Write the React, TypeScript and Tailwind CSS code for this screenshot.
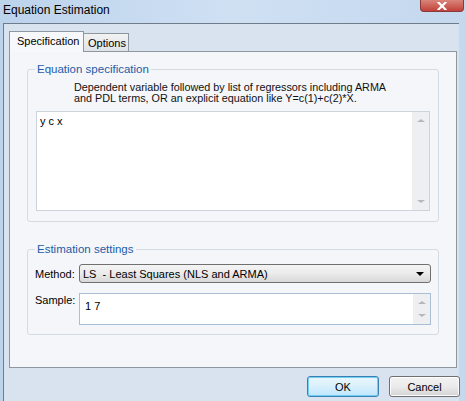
import React from "react";

const ui = { fontFamily: '"Liberation Sans", Arial, sans-serif' };

function ScrollArrows({ h }: { h: string }) {
  return (
    <div className={`w-[17px] ${h} bg-[#eeeff1] flex flex-col justify-between items-center py-[7px]`}>
      <span className="w-0 h-0 border-x-[4px] border-x-transparent border-b-[3px] border-b-[#b4b8bd]" />
      <span className="w-0 h-0 border-x-[4px] border-x-transparent border-t-[3px] border-t-[#b4b8bd]" />
    </div>
  );
}

function GroupBox({ label, className, children }: { label: string; className: string; children: React.ReactNode }) {
  return (
    <div className={`relative border border-[#d5dbe2] rounded-[3px] ${className}`}>
      <span className="absolute -top-[8px] left-[7px] px-[2px] bg-[#f4f6fa] text-[#1d5ca8] text-[11.5px] leading-[14px]">
        {label}
      </span>
      {children}
    </div>
  );
}

export default function App() {
  return (
    <div
      className="w-[465px] h-[401px] overflow-hidden flex flex-col bg-gradient-to-r from-[#bcd3ec] via-[#cfe0f3] to-[#c4d8ee] text-black"
      style={ui}
    >
      {/* title bar */}
      <div className="h-[23px] shrink-0 flex justify-between items-start">
        <span className="pl-[3px] pt-[2px] text-[12px] leading-[16px] text-black">Equation Estimation</span>
        <div className="mr-[1px] w-[44px] h-[12px] rounded-b-[4px] border border-t-0 border-[#8a3a3a] bg-gradient-to-b from-[#d9847a] to-[#c0403a] flex items-center justify-center">
          <svg width="10" height="8" viewBox="0 0 10 8">
            <path d="M1.5 0.5 L8.5 7.5 M8.5 0.5 L1.5 7.5" stroke="#ffffff" strokeWidth="2.2" strokeLinecap="square" />
          </svg>
        </div>
      </div>

      {/* client area */}
      <div className="flex-1 ml-[3px] mr-[6px] border-l border-t border-[#6f7c8c] bg-[#d9e3f0] pt-[7px]">
        {/* tabs */}
        <div className="flex items-end ml-[5px] h-[20px]">
          <div className="h-[21px] w-[75px] border border-b-0 border-[#8e96a0] bg-[#f6f8fb] text-[11px] leading-[19px] pl-[7px] relative z-10 -mb-px">
            Specification
          </div>
          <div className="h-[18px] w-[45px] border border-l-0 border-b-0 border-[#8e96a0] bg-gradient-to-b from-[#f2f2f2] to-[#dfe3e8] text-[11px] leading-[18px] pl-[4px]">
            Options
          </div>
        </div>

        {/* tab panel */}
        <div className="ml-[5px] mr-[2px] h-[317px] border border-[#8e96a0] bg-[#f4f6fa] pt-[17px] px-[17px]">
          <GroupBox label="Equation specification" className="h-[153px]">
            <div className="pl-[46px] pt-[12px] text-[10.8px] leading-[11px] text-[#111]">
              <div>Dependent variable followed by list of regressors including ARMA</div>
              <div>and PDL terms, OR an explicit equation like Y=c(1)+c(2)*X.</div>
            </div>
            <div className="mt-[7px] ml-[8px] mr-[8px] h-[100px] border border-[#cdd3da] bg-white flex">
              <div className="flex-1 pl-[3px] pt-[2px] text-[11px] leading-[14px]">y c x</div>
              <ScrollArrows h="h-full" />
            </div>
          </GroupBox>

          <GroupBox label="Estimation settings" className="mt-[27px] h-[86px]">
            <div className="pt-[14px] pl-[7px] pr-[7px] flex flex-col gap-[10px]">
              <div className="flex items-center">
                <span className="w-[44px] text-[11px] leading-[14px]">Method:</span>
                <div className="flex-1 h-[19px] rounded-[3px] border border-[#707070] bg-gradient-to-b from-[#f4f4f4] via-[#ebebeb] to-[#d8d8d8] flex items-center justify-between pl-[3px] pr-[6px]">
                  <span className="text-[11px] leading-[14px]">LS&nbsp; - Least Squares (NLS and ARMA)</span>
                  <span className="w-0 h-0 border-x-[4px] border-x-transparent border-t-[4px] border-t-black" />
                </div>
              </div>
              <div className="flex items-start">
                <span className="w-[44px] text-[11px] leading-[14px]">Sample:</span>
                <div className="flex-1 h-[32px] border border-[#a9bfd6] bg-white flex">
                  <div className="flex-1 pl-[5px] pt-[5px] text-[11px] leading-[14px]">1 7</div>
                  <ScrollArrows h="h-full" />
                </div>
              </div>
            </div>
          </GroupBox>
        </div>

        {/* buttons */}
        <div className="flex justify-end gap-[10px] mt-[8px] mr-[-1px]">
          <button className="w-[72px] h-[21px] rounded-[3px] border border-[#3c7fb1] bg-gradient-to-b from-[#eaf6fd] via-[#d9f0fc] to-[#bee6fd] shadow-[inset_0_0_0_1px_#6fd0f4] text-[11px] leading-[14px]">
            OK
          </button>
          <button className="w-[71px] h-[21px] rounded-[3px] border border-[#707070] bg-gradient-to-b from-[#f2f2f2] via-[#ebebeb] to-[#d4d4d4] shadow-[inset_0_0_0_1px_#fcfcfc] text-[11px] leading-[14px]">
            Cancel
          </button>
        </div>
      </div>
    </div>
  );
}
